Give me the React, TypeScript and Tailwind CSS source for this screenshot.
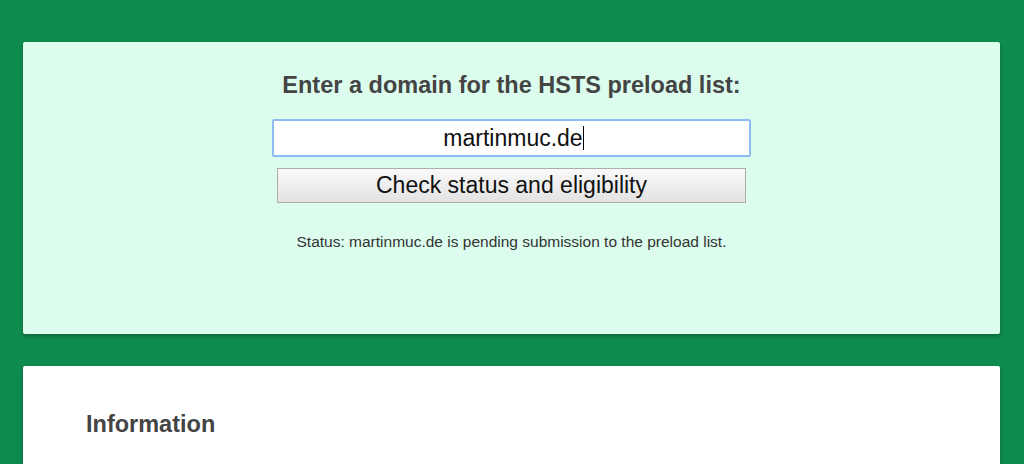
import React from "react";

export default function App() {
  return (
    <div
      className="w-[1024px] h-[464px] overflow-hidden bg-[#0e8c4f] pt-[42px] px-[23px] flex flex-col gap-[32px]"
      style={{ fontFamily: '"Liberation Sans", Arial, sans-serif' }}
    >
      <div className="w-[977px] h-[292px] shrink-0 bg-[#dcfdee] rounded-[2px] shadow-[0_2px_4px_rgba(0,0,0,0.3)] flex flex-col items-center pt-[27px]">
        <h1 className="text-[23.5px] leading-[32px] font-bold text-[#444]">
          Enter a domain for the HSTS preload list:
        </h1>
        <div className="mt-[18px] w-[479px] h-[38px] bg-white border-[2px] border-[#8ebcf2] rounded-[2px] flex items-center justify-center">
          <span className="text-[23px] text-[#111] leading-none ml-[4px]">martinmuc.de</span>
          <span className="w-[1px] h-[24px] bg-black" />
        </div>
        <button className="mt-[11px] w-[469px] h-[35px] border border-[#adadad] bg-gradient-to-b from-[#fafafa] to-[#e2e2e2] text-[23px] text-[#111] leading-none flex items-center justify-center">
          Check status and eligibility
        </button>
        <p className="mt-[30px] text-[15.5px] text-[#333] leading-[18px]">
          Status: martinmuc.de is pending submission to the preload list.
        </p>
      </div>
      <div className="w-[977px] h-[200px] shrink-0 bg-white rounded-[2px] shadow-[0_2px_4px_rgba(0,0,0,0.3)] pt-[44px] pl-[63px]">
        <h2 className="text-[23.5px] leading-[28px] font-bold text-[#444]">Information</h2>
      </div>
    </div>
  );
}
